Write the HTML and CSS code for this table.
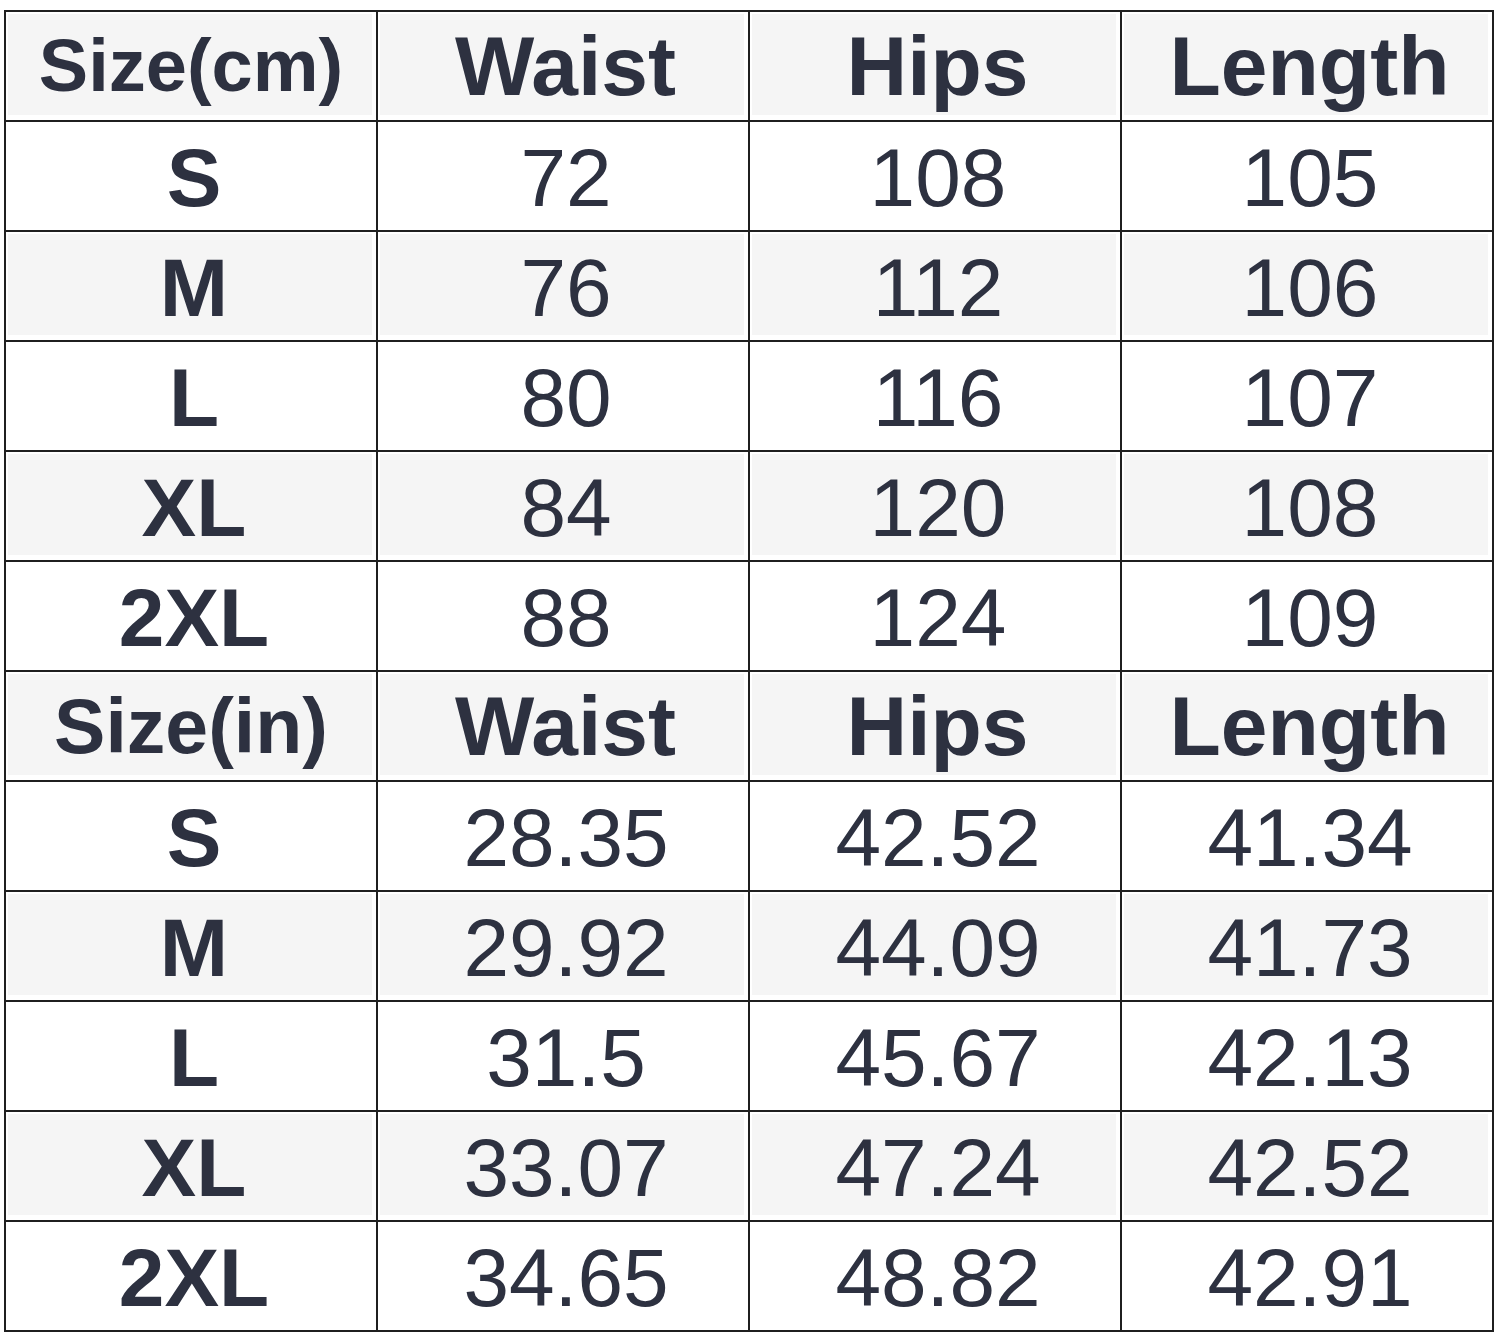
FILE: index.html
```html
<!DOCTYPE html>
<html>
<head>
<meta charset="utf-8">
<link rel="stylesheet" href="styles.css">
</head>
<body>
<div class="chart">
  <div class="cell head shade label-cm">Size(cm)</div>
  <div class="cell head shade">Waist</div>
  <div class="cell head shade">Hips</div>
  <div class="cell head shade">Length</div>

  <div class="cell size">S</div><div class="cell">72</div><div class="cell">108</div><div class="cell">105</div>
  <div class="cell size shade">M</div><div class="cell shade">76</div><div class="cell shade">112</div><div class="cell shade">106</div>
  <div class="cell size">L</div><div class="cell">80</div><div class="cell">116</div><div class="cell">107</div>
  <div class="cell size shade">XL</div><div class="cell shade">84</div><div class="cell shade">120</div><div class="cell shade">108</div>
  <div class="cell size">2XL</div><div class="cell">88</div><div class="cell">124</div><div class="cell">109</div>

  <div class="cell head shade label-in">Size(in)</div>
  <div class="cell head shade">Waist</div>
  <div class="cell head shade">Hips</div>
  <div class="cell head shade">Length</div>

  <div class="cell size">S</div><div class="cell">28.35</div><div class="cell">42.52</div><div class="cell">41.34</div>
  <div class="cell size shade">M</div><div class="cell shade">29.92</div><div class="cell shade">44.09</div><div class="cell shade">41.73</div>
  <div class="cell size">L</div><div class="cell">31.5</div><div class="cell">45.67</div><div class="cell">42.13</div>
  <div class="cell size shade">XL</div><div class="cell shade">33.07</div><div class="cell shade">47.24</div><div class="cell shade">42.52</div>
  <div class="cell size">2XL</div><div class="cell">34.65</div><div class="cell">48.82</div><div class="cell">42.91</div>
</div>
</body>
</html>
```

FILE: styles.css
```css
html, body {
  margin: 0;
  padding: 0;
  background: #ffffff;
}

.chart {
  width: 1490px;
  margin: 10px 0 0 4px;
  background: #1f1f1f;
  padding: 2px;
  box-sizing: border-box;
  display: grid;
  grid-template-columns: repeat(4, 1fr);
  grid-auto-rows: 108px;
  gap: 2px;
}

.cell {
  background: #ffffff;
  display: flex;
  align-items: center;
  justify-content: center;
  padding: 4px 0 0 6px;
  box-sizing: border-box;
  font-family: "Liberation Sans", Arial, sans-serif;
  font-size: 82px;
  color: #2d3140;
  line-height: 1;
  white-space: nowrap;
}

.shade {
  background: #f5f5f5;
  box-shadow: inset 2px 2px 0 #ffffff, inset -4px -5px 0 #ffffff;
}

.head {
  font-weight: bold;
  font-size: 84px;
  padding: 0 0 0 5px;
}

.label-cm {
  font-size: 74px;
  padding-left: 0;
}

.label-in {
  font-size: 77px;
  padding-left: 0;
}

.size {
  font-weight: bold;
}
```
